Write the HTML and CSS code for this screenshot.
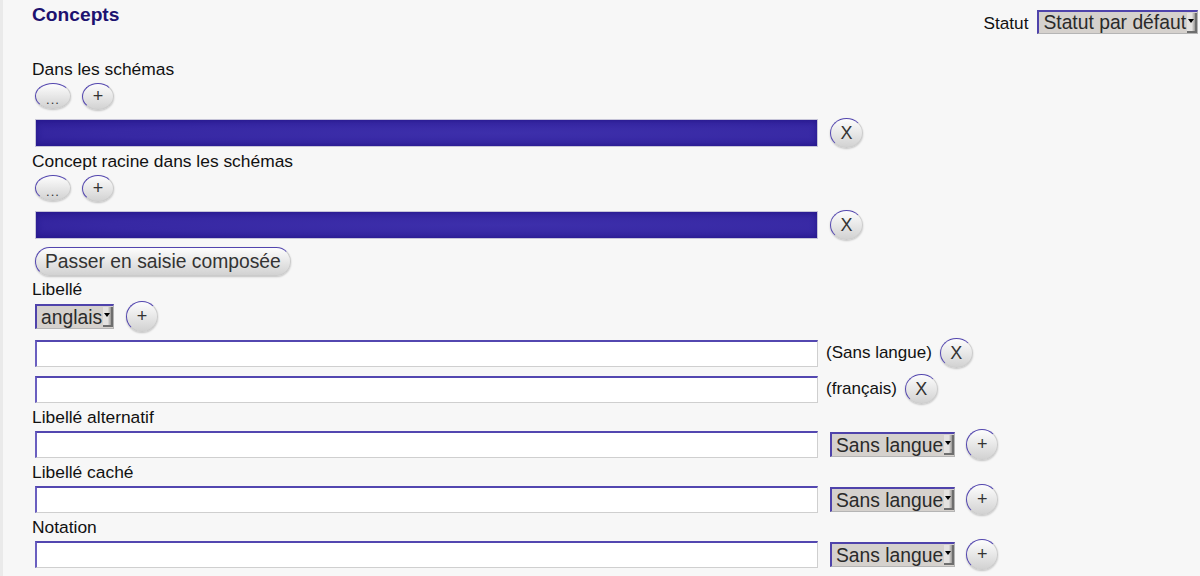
FILE: index.html
```html
<!DOCTYPE html>
<html lang="fr">
<head>
<meta charset="utf-8">
<title>Concepts</title>
<link rel="stylesheet" href="styles.css">
</head>
<body>
<div class="page">
  <header class="head">
    <h1 class="title">Concepts</h1>
    <div class="status">
      <span class="status-label">Statut</span>
      <div class="select select-status"><span class="select-text">Statut par défaut</span><span class="arrow"></span></div>
    </div>
  </header>

  <section class="field">
    <div class="label">Dans les schémas</div>
    <div class="btns">
      <button class="btn btn-dots">...</button>
      <button class="btn btn-plus-sm">+</button>
    </div>
    <div class="row row-bar">
      <div class="bar"></div>
      <button class="btn btn-x gap-12">X</button>
    </div>
  </section>

  <section class="field field-tight">
    <div class="label">Concept racine dans les schémas</div>
    <div class="btns">
      <button class="btn btn-dots">...</button>
      <button class="btn btn-plus-sm">+</button>
    </div>
    <div class="row row-bar">
      <div class="bar"></div>
      <button class="btn btn-x gap-12">X</button>
    </div>
  </section>

  <div class="row row-compose">
    <button class="btn btn-pill">Passer en saisie composée</button>
  </div>

  <section class="field field-tight">
    <div class="label">Libellé</div>
    <div class="row row-lang">
      <div class="select"><span class="select-text">anglais</span><span class="arrow"></span></div>
      <button class="btn btn-round gap-12">+</button>
    </div>
    <div class="row row-value">
      <input class="input" type="text">
      <span class="lang">(Sans langue)</span>
      <button class="btn btn-x">X</button>
    </div>
    <div class="row row-value">
      <input class="input" type="text">
      <span class="lang">(français)</span>
      <button class="btn btn-x">X</button>
    </div>
  </section>

  <section class="field field-tight">
    <div class="label">Libellé alternatif</div>
    <div class="row row-entry">
      <input class="input" type="text">
      <div class="select gap-12"><span class="select-text">Sans langue</span><span class="arrow"></span></div>
      <button class="btn btn-round gap-11">+</button>
    </div>
  </section>

  <section class="field field-next">
    <div class="label">Libellé caché</div>
    <div class="row row-entry">
      <input class="input" type="text">
      <div class="select gap-12"><span class="select-text">Sans langue</span><span class="arrow"></span></div>
      <button class="btn btn-round gap-11">+</button>
    </div>
  </section>

  <section class="field field-next">
    <div class="label">Notation</div>
    <div class="row row-entry">
      <input class="input" type="text">
      <div class="select gap-12"><span class="select-text">Sans langue</span><span class="arrow"></span></div>
      <button class="btn btn-round gap-11">+</button>
    </div>
  </section>
</div>
</body>
</html>
```
FILE: styles.css
```css
* { box-sizing: border-box; }

html, body {
  margin: 0;
  background: #f7f7f7;
}

body {
  font-family: "Liberation Sans", Arial, sans-serif;
  color: #111;
}

.page {
  border-left: 3px solid #eaeaea;
  padding-left: 29px;
  padding-right: 2px;
  min-height: 576px;
}

.head {
  display: flex;
  justify-content: space-between;
  align-items: flex-start;
  height: 59px;
  padding-top: 4px;
}

.title {
  margin: 0;
  font-size: 19.2px;
  line-height: 22px;
  font-weight: bold;
  color: #1d1270;
}

.status {
  display: flex;
  align-items: baseline;
  gap: 9px;
  margin-top: 6px;
}

.status-label {
  font-size: 17.2px;
  line-height: 20px;
}

.label {
  font-size: 17.4px;
  line-height: 20px;
}

.field-tight { margin-top: 3px; }
.field-next { margin-top: 2px; }

.btns {
  display: flex;
  align-items: center;
  gap: 11px;
  margin: 4px 0 0 3px;
  height: 26px;
}

.row {
  display: flex;
  align-items: center;
  margin-left: 3px;
}

.row-bar { height: 30px; margin-top: 9px; }
.row-compose { margin-top: 7px; height: 29px; }
.row-lang { height: 31px; margin-top: 2px; }
.row-value { height: 30px; margin-top: 6px; }
.row-entry { height: 31px; margin-top: 2px; }

.gap-12 { margin-left: 12px; }
.gap-11 { margin-left: 11px; }

.select {
  display: inline-flex;
  align-items: center;
  height: 25px;
  background: #d5d1cd;
  border-top: 2px solid #4f43ab;
  border-left: 2px solid #4f43ab;
  border-right: 1px solid #b5b5b5;
  border-bottom: 1px solid #b5b5b5;
  padding-left: 4px;
  font-size: 19.3px;
  line-height: 21px;
  color: #2a2a2a;
  white-space: nowrap;
}

.select-status { height: 24px; }

.arrow {
  display: flex;
  justify-content: center;
  width: 10px;
  height: 20px;
  margin-left: 1px;
  padding-top: 6px;
  background: linear-gradient(90deg, #e4e2e0 0, #e4e2e0 60%, #9a9896 100%);
  border-right: 2px solid #6e6e6e;
  border-bottom: 2px solid #6e6e6e;
}

.arrow::after {
  content: "";
  width: 0;
  height: 0;
  border-left: 3px solid transparent;
  border-right: 3px solid transparent;
  border-top: 4px solid #000;
}

.btn {
  font-family: "Liberation Sans", Arial, sans-serif;
  display: inline-flex;
  align-items: center;
  justify-content: center;
  padding: 0;
  color: #333;
  background: linear-gradient(#fdfdfd, #d2d2d2);
  border: 1px solid #cbcbcb;
  border-top-color: #5245ae;
  border-left-color: #5245ae;
  box-shadow: 0 1px 2px rgba(0, 0, 0, 0.22);
  cursor: pointer;
}

.btn-dots {
  width: 36px;
  height: 26px;
  border-radius: 50%;
  font-size: 13px;
  padding-top: 7px;
  letter-spacing: 1px;
}

.btn-plus-sm {
  width: 32px;
  height: 27px;
  border-radius: 50%;
  font-size: 18px;
}

.btn-round {
  width: 32px;
  height: 31px;
  border-radius: 50%;
  font-size: 18px;
}

.btn-x {
  width: 33px;
  height: 30px;
  border-radius: 50%;
  font-size: 18px;
}

.btn-pill {
  height: 29px;
  padding: 0 9px;
  border-radius: 15px;
  font-size: 19.3px;
}

.bar {
  width: 783px;
  height: 28px;
  background: radial-gradient(ellipse at 60% 50%, #3d2fab 0, #3728a3 60%, #2d1e96 100%);
  border: 1px solid #c6c4d8;
  box-shadow: inset 0 0 6px #24168a;
}

.input {
  width: 783px;
  height: 27px;
  margin: 0;
  padding: 0 4px;
  background: #fff;
  border: 1px solid #cfcfcf;
  border-top: 2px solid #5347b0;
  border-left: 2px solid #6a5fc0;
  font-family: "Liberation Sans", Arial, sans-serif;
  font-size: 17px;
}

.lang {
  font-size: 17px;
  margin: 0 8px;
  white-space: nowrap;
}
```
